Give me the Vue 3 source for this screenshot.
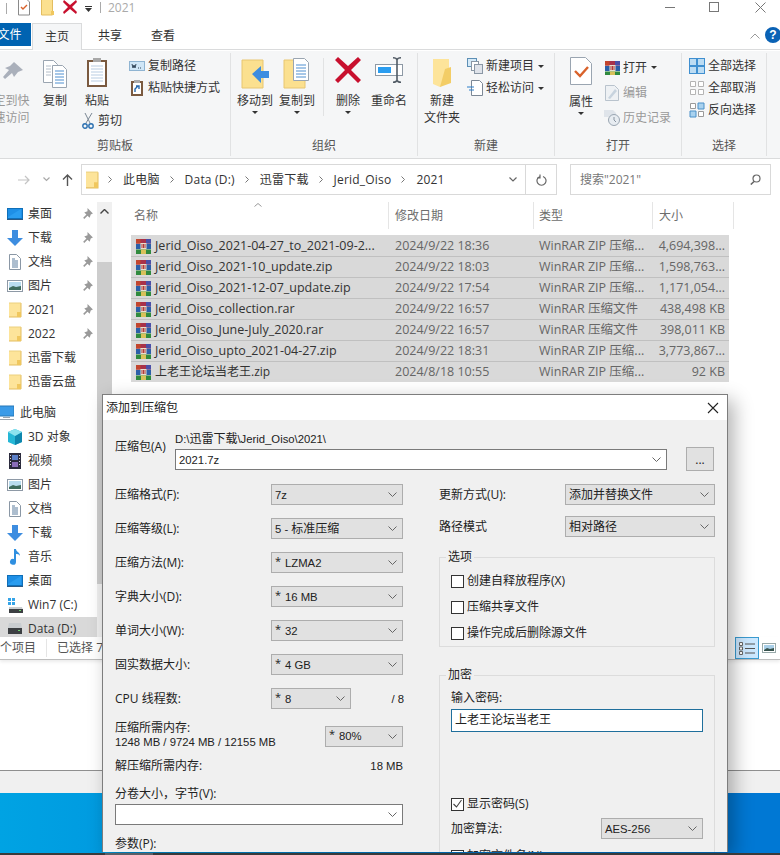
<script setup>
// 资源管理器 + 7-Zip 对话框截图
const g = {
  folder: '<path d="M2 1h12v14H2z" fill="#fde49a"/><path d="M14 1v14H2" fill="none" stroke="#e3bd5f"/><path d="M10 10h4v5h-4z" fill="#f0c75e"/><path d="M2 1h12" stroke="#ecd07e"/>',
  desktop: '<rect x="0.5" y="2.5" width="15" height="10" fill="#1e8fe6" stroke="#0f6fb8"/><path d="M1 11l13-8v9H1z" fill="#2a9df0"/><path d="M0 13h16v1H0z" fill="#2b5a86"/>',
  download: '<path d="M5 0h6v8h5l-8 8-8-8h5z" fill="#3d8de0"/>',
  doc: '<path d="M2.5 .5h7l4 4v11h-11z" fill="#fff" stroke="#8a97a5"/><path d="M5 5h3M5 7h6M5 9h6M5 11h6M5 13h6" stroke="#5a7d9e"/>',
  image: '<rect x="0.5" y="2.5" width="15" height="11" fill="#fff" stroke="#8e99a6"/><rect x="2" y="4" width="12" height="8" fill="#b9dcef"/><path d="M2 10l4-2 3 1 5-1v4H2z" fill="#3f6b5d"/>',
  pc: '<rect x="1" y="1" width="15" height="10" fill="#3a9be8" stroke="#2678b8"/><path d="M5 12h7v1H5zM2 14h14v1H2z" fill="#99a4ae"/>',
  cube: '<path d="M8 0l7 3v10l-7 3-7-3V3z" fill="#25b7d6"/><path d="M8 7l7-4v10l-7 3z" fill="#0e86ad"/><path d="M8 0l7 3-7 4-7-4z" fill="#8ce3ef"/>',
  video: '<rect x="2" y="0" width="12" height="16" fill="#2b2b3d"/><rect x="5" y="2" width="6" height="5" fill="#5b7fc8"/><rect x="5" y="9" width="6" height="5" fill="#8a6db8"/><path d="M3 2h1v1H3zM3 5h1v1H3zM3 8h1v1H3zM3 11h1v1H3zM12 2h1v1h-1zM12 5h1v1h-1zM12 8h1v1h-1zM12 11h1v1h-1z" fill="#ddd"/>',
  music: '<path d="M7 0h2c0 3 4 3 4 7-1-2-3-2-4-2v8a3 3 0 1 1-2-3z" fill="#2f8fe0"/>',
  win: '<path d="M1 1h3v3H1zM5 1h3v3H5zM1 5h3v3H1zM5 5h3v3H5z" fill="#35a4e8"/><path d="M2 10h13l1 3v3H2z" fill="#c9cdd0"/><rect x="2" y="12" width="14" height="4" fill="#3c3f42"/><rect x="12" y="13" width="2" height="1" fill="#6fd36f"/>',
  disk: '<path d="M2 2h12l1 5v4H1V7z" fill="#c9cdd0"/><rect x="1" y="7" width="14" height="6" fill="#3c3f42"/><rect x="11" y="9" width="2" height="1" fill="#6fd36f"/>',
  pin: '<path d="M6 1l5 5-2 1-1 3-2-2-3 3-1-1 3-3-2-2 3-1z" fill="#9a9a9a"/>',
  rar: '<rect x="1" y="1" width="15" height="4.5" fill="#a8324a"/><rect x="1" y="1" width="4.5" height="4.5" fill="#c2452d"/><rect x="11" y="1" width="5" height="4.5" fill="#4a4fa8"/><rect x="1" y="6" width="15" height="5" fill="#2b5fa8"/><rect x="5.5" y="5" width="6" height="6" fill="#e8e0d0"/><path d="M7 6v4M8.5 6v4M10 6v4" stroke="#b33a3a"/><rect x="1" y="11.5" width="15" height="4.5" fill="#2f8a3e"/><rect x="6" y="11.5" width="5" height="4.5" fill="#d8c15a"/>'
}

const sideTop = [
  { icon: 'desktop', text: '桌面', pin: true },
  { icon: 'download', text: '下载', pin: true },
  { icon: 'doc', text: '文档', pin: true },
  { icon: 'image', text: '图片', pin: true },
  { icon: 'folder', text: '2021', pin: true },
  { icon: 'folder', text: '2022', pin: true },
  { icon: 'folder', text: '迅雷下载' },
  { icon: 'folder', text: '迅雷云盘' }
]
const sideBottom = [
  { icon: 'cube', text: '3D 对象' },
  { icon: 'video', text: '视频' },
  { icon: 'image', text: '图片' },
  { icon: 'doc', text: '文档' },
  { icon: 'download', text: '下载' },
  { icon: 'music', text: '音乐' },
  { icon: 'desktop', text: '桌面' },
  { icon: 'win', text: 'Win7 (C:)' },
  { icon: 'disk', text: 'Data (D:)', active: true }
]
const crumbs = ['此电脑', 'Data (D:)', '迅雷下载', 'Jerid_Oiso', '2021']
const zipType = 'WinRAR ZIP 压缩...'
const rarType = 'WinRAR 压缩文件'
const files = [
  ['Jerid_Oiso_2021-04-27_to_2021-09-2...', '2024/9/22 18:36', zipType, '4,694,398...'],
  ['Jerid_Oiso_2021-10_update.zip', '2024/9/22 18:03', zipType, '1,598,763...'],
  ['Jerid_Oiso_2021-12-07_update.zip', '2024/9/22 17:54', zipType, '1,171,054...'],
  ['Jerid_Oiso_collection.rar', '2024/9/22 16:57', rarType, '438,498 KB'],
  ['Jerid_Oiso_June-July_2020.rar', '2024/9/22 16:57', rarType, '398,011 KB'],
  ['Jerid_Oiso_upto_2021-04-27.zip', '2024/9/22 18:31', zipType, '3,773,867...'],
  ['上老王论坛当老王.zip', '2024/8/18 10:55', zipType, '92 KB']
]
const leftRows = [
  { label: '压缩格式(F):', lat: '7z' },
  { label: '压缩等级(L):', lat: '5 - ', cjk: '标准压缩' },
  { label: '压缩方法(M):', star: true, lat: 'LZMA2' },
  { label: '字典大小(D):', star: true, lat: '16 MB' },
  { label: '单词大小(W):', star: true, lat: '32' },
  { label: '固实数据大小:', star: true, lat: '4 GB' }
]
</script>

<template>
  <div class="page">
    <div class="explorer">
      <div class="titlebar">
        <i class="tb-sep"></i>
        <svg class="t-check" width="12" height="16" viewBox="0 0 12 16"><path d="M.5-1h8l3 3v13H.5z" fill="#fff" stroke="#8a8a8a"/><path d="M3 7l2 2 4-4" fill="none" stroke="#d9622b" stroke-width="1.4"/></svg>
        <svg class="t-folder" width="14" height="16" viewBox="0 0 14 16"><path d="M.5-1h11v16H.5z" fill="#fbe08f" stroke="#e3bd5f"/><path d="M10 11h3v4h-3z" fill="#f0c75e"/></svg>
        <svg class="t-x" width="14" height="14" viewBox="0 0 14 14"><path d="M1 0l6 5 6-5 1 2-5 5 5 5-1 2-6-5-6 5-1-2 5-5-5-5z" fill="#c8102e"/></svg>
        <svg class="t-drop" width="7" height="6" viewBox="0 0 7 6"><path d="M0 0h7v1H0zM0 2h7L3.5 6z" fill="#333"/></svg>
        <i class="tb-sep second"></i>
        <span class="t-name">2021</span>
        <div class="win-btns">
          <i class="w-min"></i>
          <i class="w-max"></i>
          <svg width="11" height="11" viewBox="0 0 11 11"><path d="M.5.5l10 10M10.5.5l-10 10" stroke="#777"/></svg>
        </div>
      </div>

      <div class="tabs">
        <span class="tab-file">文件</span>
        <span class="tab on">主页</span>
        <span class="tab">共享</span>
        <span class="tab">查看</span>
        <svg class="tab-up" width="10" height="6" viewBox="0 0 10 6"><path d="M.5 5.5L5 1l4.5 4.5" fill="none" stroke="#999"/></svg>
        <span class="help">?</span>
      </div>

      <div class="ribbon">
        <div class="group clip">
          <div class="group-body">
            <div class="big off pinb">
              <svg width="24" height="32" viewBox="0 0 24 32"><path d="M14 5l9 8-5 2-4 5-2-4-7 6-2-2 6-7-4-2 5-2z" fill="#aab0bb"/></svg>
              <span>定到快<br>速访问</span>
            </div>
            <div class="big copyb">
              <svg width="26" height="32" viewBox="0 0 26 32"><path d="M1.5 3.5h10l4 4v18h-14z" fill="#fff" stroke="#9aa5b1"/><path d="M10.5 8.5h10l4 4v18h-14z" fill="#fff" stroke="#9aa5b1"/><path d="M13 14h9M13 17h9M13 20h9M13 23h9M13 26h9" stroke="#4f8fd0"/><path d="M4 9h5M4 12h5M4 15h5M4 18h5" stroke="#b4bec9"/></svg>
              <span>复制</span>
            </div>
            <div class="big pasteb">
              <svg width="22" height="32" viewBox="0 0 22 32"><rect x="1" y="3" width="20" height="27" fill="#7a5a40"/><rect x="3" y="5" width="16" height="23" fill="#fff"/><path d="M5 9h12M5 12h12M5 15h12M5 18h12M5 21h12M5 24h12" stroke="#b9cde2"/><rect x="7" y="1" width="8" height="4" fill="#a8a8a8"/></svg>
              <span>粘贴</span>
            </div>
            <div class="clip-right">
              <div class="small"><svg width="16" height="10" viewBox="0 0 16 10"><rect x=".5" y=".5" width="15" height="9" fill="#cfe6f7" stroke="#8fb4d2"/><path d="M3 3l1 4 1-3 1 3 1-4M9 7h1M11 7h1" stroke="#33475b" fill="none"/></svg><span>复制路径</span></div>
              <div class="small"><svg class="short" width="14" height="16" viewBox="0 0 14 16"><rect x="1" y="1" width="12" height="15" fill="#7a5a40"/><rect x="3" y="3" width="8" height="11" fill="#fff"/><rect x="4" y="0" width="6" height="3" fill="#aaa"/><path d="M5 12V9l3-3M6 6h3v3" stroke="#2668ad" fill="none" stroke-width="1.4"/></svg><span>粘贴快捷方式</span></div>
              <div class="small cut"><svg width="12" height="16" viewBox="0 0 12 16"><path d="M3 0l5 10M10 0L4 10" stroke="#7a8794" fill="none"/><circle cx="3" cy="13" r="2.2" fill="none" stroke="#2a6fb0" stroke-width="1.4"/><circle cx="9" cy="13" r="2.2" fill="none" stroke="#2a6fb0" stroke-width="1.4"/></svg><span>剪切</span></div>
            </div>
          </div>
          <div class="group-label">剪贴板</div>
        </div>

        <div class="group org">
          <div class="group-body">
            <div class="big moveb">
              <svg width="28" height="32" viewBox="0 0 28 32"><path d="M1 3h21v28H1z" fill="#fbe08f" stroke="#e8c670"/><path d="M11 17l9-8v5h8v7h-8v5z" fill="#3d8de0"/></svg>
              <span>移动到</span><i class="caret"></i>
            </div>
            <div class="big copyto">
              <svg width="28" height="32" viewBox="0 0 28 32"><path d="M1 3h21v28H1z" fill="#fbe08f" stroke="#e8c670"/><path d="M10.5 1.5h11l4 4v18h-15z" fill="#fff" stroke="#9aa5b1"/><path d="M13 8h10M13 11h10M13 14h10M13 17h10M13 20h10" stroke="#4f8fd0"/></svg>
              <span>复制到</span><i class="caret"></i>
            </div>
            <i class="org-sep"></i>
            <div class="big delb">
              <svg width="26" height="26" viewBox="0 0 26 26"><path d="M3 0l10 9 10-9 3 3-10 10 10 10-3 3-10-10-10 10-3-3 10-10L0 3z" fill="#c8102e"/></svg>
              <span>删除</span><i class="caret"></i>
            </div>
            <div class="big renb">
              <svg width="30" height="26" viewBox="0 0 30 26"><rect x="1.5" y="7.5" width="27" height="11" fill="#fff" stroke="#8d99a5"/><rect x="4" y="10" width="13" height="6" fill="#2a9df0"/><path d="M19 .8c2 0 3.5.4 4 2v20.4c-.5 1.6-2 2-4 2M27 .8c-2 0-3.5.4-4 2v20.4c.5 1.6 2 2 4 2" stroke="#505a64" stroke-width="1.6" fill="none"/></svg>
              <span>重命名</span>
            </div>
          </div>
          <div class="group-label">组织</div>
        </div>

        <div class="group newg">
          <div class="group-body">
            <div class="big newb">
              <svg width="20" height="32" viewBox="0 0 20 32"><path d="M1 2h16v22l-9 6-7-3z" fill="#fde49a"/><path d="M13 12l6-2 0 16-11 4z" fill="#f3cd66"/></svg>
              <span>新建<br>文件夹</span>
            </div>
            <div class="new-right">
              <div class="small"><svg width="16" height="16" viewBox="0 0 16 16"><rect x=".5" y=".5" width="9" height="8" fill="#d5eaf8" stroke="#5d8fb5"/><rect x="4.5" y="3.5" width="7" height="9" fill="#fff" stroke="#8a97a5"/><rect x="7.5" y="6.5" width="8" height="9" fill="#dfe3ea" stroke="#8a97a5"/></svg><span>新建项目</span><i class="caret in"></i></div>
              <div class="small"><svg width="16" height="16" viewBox="0 0 16 16"><path d="M4.5.5h8l3 3v12h-11z" fill="#fff" stroke="#7c8896"/><path d="M0 7h7M2 10h5" stroke="#2c7fc9"/></svg><span>轻松访问</span><i class="caret in"></i></div>
            </div>
          </div>
          <div class="group-label">新建</div>
        </div>

        <div class="group openg">
          <div class="group-body">
            <div class="big propb">
              <svg width="22" height="28" viewBox="0 0 22 28"><path d="M.5.5h15l6 6v21H.5z" fill="#fff" stroke="#9aa5b1"/><path d="M5 14l5 5 8-9" fill="none" stroke="#d9622b" stroke-width="2.4"/></svg>
              <span>属性</span><i class="caret"></i>
            </div>
            <div class="open-right">
              <div class="small"><svg width="16" height="15" viewBox="0 0 16 15" v-html="g.rar"></svg><span>打开</span><i class="caret in"></i></div>
              <div class="small off"><svg width="16" height="16" viewBox="0 0 16 16"><path d="M1.5.5h9l4 4v11h-13z" fill="#eef1f4" stroke="#b9c3cd"/><path d="M4 13l7-9 2 2-7 8z" fill="#c7d3de"/></svg><span>编辑</span></div>
              <div class="small off"><svg width="16" height="16" viewBox="0 0 16 16"><path d="M0 0h9l3 3v4H0z" fill="#dfe4ea"/><circle cx="10" cy="10" r="5.5" fill="#e7ecf1" stroke="#9aa6b2"/><path d="M10 7v3l2 2" stroke="#88939f" fill="none"/></svg><span>历史记录</span></div>
            </div>
          </div>
          <div class="group-label">打开</div>
        </div>

        <div class="group selg">
          <div class="group-body sel-col">
            <div class="small"><svg width="16" height="16" viewBox="0 0 16 16"><rect width="16" height="16" fill="#3f8fd0"/><path d="M1 1h6v6H1zM9 1h6v6H9zM1 9h6v6H1zM9 9h6v6H9z" fill="#bcdcf3"/></svg><span>全部选择</span></div>
            <div class="small"><svg width="16" height="16" viewBox="0 0 16 16"><path d="M1.5 1.5h5v5h-5zM9.5 1.5h5v5h-5zM1.5 9.5h5v5h-5zM9.5 9.5h5v5h-5z" fill="#fff" stroke="#b4b4b4"/></svg><span>全部取消</span></div>
            <div class="small"><svg width="16" height="16" viewBox="0 0 16 16"><path d="M1.5 1.5h5v5h-5zM9.5 9.5h5v5h-5z" fill="#fff" stroke="#9a9a9a"/><path d="M9 1h6v6H9zM1 9h6v6H1z" fill="#a9d2ef" stroke="#4a90c8"/></svg><span>反向选择</span></div>
          </div>
          <div class="group-label">选择</div>
        </div>
      </div>

      <div class="addr-row">
        <svg class="nav first" width="12" height="10" viewBox="0 0 12 10"><path d="M0 5h11M7 1l4 4-4 4" fill="none" stroke="#c4c4c4" stroke-width="1.2"/></svg>
        <svg class="nav mid" width="7" height="5" viewBox="0 0 7 5"><path d="M.5.5l3 3 3-3" fill="none" stroke="#a8a8a8" stroke-width="1.2"/></svg>
        <svg class="nav up" width="11" height="12" viewBox="0 0 11 12"><path d="M5.5 12V1M1 5.5l4.5-4.5 4.5 4.5" fill="none" stroke="#555" stroke-width="1.4"/></svg>
        <div class="addr">
          <svg class="addr-folder" width="16" height="18" viewBox="0 0 16 16" preserveAspectRatio="none" v-html="g.folder"></svg>
          <template v-for="c in crumbs" :key="c">
            <svg class="chev" width="4" height="7" viewBox="0 0 4 7"><path d="M.5.5l3 3-3 3" fill="none" stroke="#777"/></svg>
            <span class="crumb">{{ c }}</span>
          </template>
          <svg class="addr-drop" width="8" height="5" viewBox="0 0 8 5"><path d="M.5.5L4 4 7.5.5" fill="none" stroke="#666" stroke-width="1.2"/></svg>
          <div class="refresh">
            <svg width="11" height="12" viewBox="0 0 11 12"><path d="M4 2.5a4.5 4.5 0 1 0 3 0M4 .5v3.5H1" fill="none" stroke="#666" stroke-width="1.2"/></svg>
          </div>
        </div>
        <div class="search">
          <span>搜索"2021"</span>
          <svg width="11" height="11" viewBox="0 0 11 11"><circle cx="6.5" cy="4.5" r="3.5" fill="none" stroke="#666" stroke-width="1.2"/><path d="M4 7.5L.8 10.5" stroke="#666" stroke-width="1.6"/></svg>
        </div>
      </div>

      <div class="main">
        <aside class="side">
          <div class="side-list">
            <div v-for="s in sideTop" :key="s.text + s.icon" class="side-item">
              <svg width="16" height="16" viewBox="0 0 16 16" v-html="g[s.icon]"></svg>
              <span>{{ s.text }}</span>
              <svg v-if="s.pin" class="pin" width="13" height="13" viewBox="0 0 12 12" v-html="g.pin"></svg>
            </div>
            <div class="side-item pc">
              <svg width="16" height="16" viewBox="0 0 16 16" v-html="g.pc"></svg>
              <span>此电脑</span>
            </div>
            <div v-for="s in sideBottom" :key="s.text" class="side-item" :class="{ active: s.active }">
              <svg width="16" height="16" viewBox="0 0 16 16" v-html="g[s.icon]"></svg>
              <span>{{ s.text }}</span>
            </div>
          </div>
          <div class="scroll">
            <svg width="9" height="5" viewBox="0 0 9 5"><path d="M.5 4.5l4-4 4 4" fill="none" stroke="#444" stroke-width="1.4"/></svg>
            <div class="thumb"></div>
          </div>
        </aside>

        <section class="list">
          <div class="list-head">
            <svg class="sort" width="8" height="4" viewBox="0 0 8 4"><path d="M.5 3.5L4 .5l3.5 3" fill="none" stroke="#999"/></svg>
            <span class="h-name">名称</span>
            <span class="h-date">修改日期</span>
            <span class="h-type">类型</span>
            <span class="h-size">大小</span>
          </div>
          <div class="rows">
            <div v-for="f in files" :key="f[0]" class="file">
              <svg width="16" height="16" viewBox="0 0 16 16" v-html="g.rar"></svg>
              <span class="f-name" :class="{ 'f-cjk': f[0].startsWith('上') }">{{ f[0] }}</span>
              <span class="f-date">{{ f[1] }}</span>
              <span class="f-type">{{ f[2] }}</span>
              <span class="f-size">{{ f[3] }}</span>
            </div>
          </div>
        </section>
      </div>

      <div class="status">
        <span class="st-count">个项目</span>
        <span class="st-sel">已选择 7</span>
        <div class="views">
          <span class="view on">
            <svg width="17" height="13" viewBox="0 0 17 13"><path d="M.5.5h3v3h-3zM.5 5h3v3h-3zM.5 9.5h3v3h-3z" fill="#fff" stroke="#666"/><path d="M6 2h10M6 6.5h10M6 11h10" stroke="#555"/></svg>
          </span>
          <span class="view">
            <svg width="14" height="10" viewBox="0 0 14 10"><rect x=".5" y=".5" width="13" height="9" fill="#fff" stroke="#9aa"/><rect x="2" y="2" width="10" height="6" fill="#a9cfe8"/><path d="M2 7l3-2 3 1 4-1v3H2z" fill="#36524c"/></svg>
          </span>
        </div>
      </div>

      <div class="blank"></div>
    </div>

    <div class="shelf"></div>
    <div class="desktop"></div>
    <div class="taskbar"><i></i></div>

    <div class="dialog">
      <div class="d-title">
        <span>添加到压缩包</span>
        <svg width="12" height="12" viewBox="0 0 12 12"><path d="M1 1l10 10M11 1L1 11" stroke="#222" stroke-width="1.1"/></svg>
      </div>
      <div class="d-body">
        <div class="archive">
          <span class="arch-label">压缩包(A)</span>
          <div class="arch-main">
            <div class="arch-path"><span class="lat">D:\</span>迅雷下载<span class="lat">\Jerid_Oiso\2021\</span></div>
            <div class="combo white arch-input">
              <span class="lat">2021.7z</span>
              <svg width="9" height="5" viewBox="0 0 9 5"><path d="M.5.5l4 4 4-4" fill="none" stroke="#666"/></svg>
            </div>
          </div>
          <div class="dots">...</div>
        </div>

        <div class="cols">
          <div class="col-left">
            <div v-for="r in leftRows" :key="r.label" class="row">
              <span>{{ r.label }}</span>
              <div class="combo sel-wide">
                <span class="val"><i v-if="r.star" class="star">*</i><span class="lat">{{ r.lat }}</span>{{ r.cjk }}</span>
                <svg width="9" height="5" viewBox="0 0 9 5"><path d="M.5.5l4 4 4-4" fill="none" stroke="#666"/></svg>
              </div>
            </div>
            <div class="row cpu">
              <span>CPU 线程数:</span>
              <div class="combo">
                <span class="val"><i class="star">*</i><span class="lat">8</span></span>
                <svg width="9" height="5" viewBox="0 0 9 5"><path d="M.5.5l4 4 4-4" fill="none" stroke="#666"/></svg>
              </div>
              <span class="of lat">/ 8</span>
            </div>
            <div class="mem">
              <div>
                <div class="mem-label">压缩所需内存:</div>
                <div class="mem-val lat">1248 MB / 9724 MB / 12155 MB</div>
              </div>
              <div class="combo sel-mem">
                <span class="val"><i class="star">*</i><span class="lat">80%</span></span>
                <svg width="9" height="5" viewBox="0 0 9 5"><path d="M.5.5l4 4 4-4" fill="none" stroke="#666"/></svg>
              </div>
            </div>
            <div class="unmem"><span>解压缩所需内存:</span><span class="lat">18 MB</span></div>
            <div class="vol-label">分卷大小，字节(V):</div>
            <div class="combo white vol">
              <span></span>
              <svg width="9" height="5" viewBox="0 0 9 5"><path d="M.5.5l4 4 4-4" fill="none" stroke="#666"/></svg>
            </div>
            <div class="param">参数(P):</div>
          </div>

          <div class="col-right">
            <div class="row r1">
              <span>更新方式(U):</span>
              <div class="combo sel-right">
                <span>添加并替换文件</span>
                <svg width="9" height="5" viewBox="0 0 9 5"><path d="M.5.5l4 4 4-4" fill="none" stroke="#666"/></svg>
              </div>
            </div>
            <div class="row r2">
              <span>路径模式</span>
              <div class="combo sel-right">
                <span>相对路径</span>
                <svg width="9" height="5" viewBox="0 0 9 5"><path d="M.5.5l4 4 4-4" fill="none" stroke="#666"/></svg>
              </div>
            </div>
            <fieldset class="box options">
              <legend>选项</legend>
              <label class="chk"><i></i>创建自释放程序(X)</label>
              <label class="chk"><i></i>压缩共享文件</label>
              <label class="chk"><i></i>操作完成后删除源文件</label>
            </fieldset>
            <fieldset class="box crypt">
              <legend>加密</legend>
              <div class="pw-label">输入密码:</div>
              <div class="pw">上老王论坛当老王</div>
              <label class="chk shown">
                <i><svg width="11" height="10" viewBox="0 0 11 10"><path d="M1.5 5l3 3 5-7" fill="none" stroke="#444" stroke-width="1.1"/></svg></i>显示密码(S)
              </label>
              <div class="row algo">
                <span>加密算法:</span>
                <div class="combo sel-algo">
                  <span class="lat">AES-256</span>
                  <svg width="9" height="5" viewBox="0 0 9 5"><path d="M.5.5l4 4 4-4" fill="none" stroke="#666"/></svg>
                </div>
              </div>
              <label class="chk names"><i><svg width="11" height="10" viewBox="0 0 11 10"><path d="M1.5 5l3 3 5-7" fill="none" stroke="#444" stroke-width="1.1"/></svg></i>加密文件名(N)</label>
            </fieldset>
          </div>
        </div>
      </div>
    </div>
  </div>
</template>

<style>
html, body { margin: 0; background: #fff; overflow: hidden; }
</style>

<style scoped>
.page {
  position: relative;
  width: 780px;
  height: 855px;
  overflow: hidden;
  background: #fff;
  color: #333;
  font: 12px/16px "Open Sans", "Noto Sans CJK SC", sans-serif;
}
i { display: block; font-style: normal; }
svg { display: block; flex: none; }

/* title bar */
.titlebar {
  height: 23px;
  display: flex;
  align-items: flex-start;
  position: relative;
}
.tb-sep { width: 1px; height: 11px; background: #aaa; margin: 3px 0 0 6px; }
.tb-sep.second { margin: 2px 0 0 8px; }
.t-check { margin-left: 11px; }
.t-folder { margin-left: 11px; }
.t-x { margin-left: 8px; }
.t-drop { margin: 6px 0 0 8px; }
.t-name { margin: 0 0 0 7px; color: #aaa; font-size: 12px; line-height: 15px; }
.win-btns { margin-left: auto; display: flex; align-items: flex-start; padding-top: 2px; }
.w-min { width: 10px; height: 1px; background: #777; margin: 5px 0 0 0; }
.w-max { width: 10px; height: 10px; border: 1px solid #777; box-sizing: border-box; margin: 0 36px 0 34px; }
.win-btns svg { margin-right: 14px; }

/* tabs */
.tabs {
  height: 26px;
  display: flex;
  align-items: stretch;
  border-bottom: 1px solid #dadbdc;
  position: relative;
}
.tab-file {
  width: 43px;
  margin-left: -12px;
  height: 23px;
  background: #0063b1;
  color: #fff;
  text-align: center;
  line-height: 23px;
}
.tab { width: 50px; text-align: center; line-height: 26px; margin-left: 3px; }
.tab.on {
  margin-left: 1px;
  background: #f5f6f7;
  border: 1px solid #dadbdc;
  border-bottom: 0;
  height: 27px;
  box-sizing: border-box;
}
.tab-up { margin: 10px 0 0 auto; }
.help {
  width: 16px;
  height: 16px;
  margin: 4px -1px 0 5px;
  border-radius: 50%;
  background: #0a62b5;
  color: #fff;
  font: bold 12px/16px "Liberation Sans", sans-serif;
  text-align: center;
}

/* ribbon */
.ribbon {
  height: 107px;
  display: flex;
  margin-top: 1px;
  background: #f5f6f7;
  border-bottom: 1px solid #dadbdc;
}
.group {
  box-sizing: border-box;
  height: 103px;
  margin-top: 2px;
  border-right: 1px solid #e1e2e3;
  display: flex;
  flex-direction: column;
}
.group-body { height: 84px; display: flex; position: relative; }
.group-label { text-align: center; color: #555; line-height: 18px; }
.clip { width: 231px; }
.org { width: 187px; }
.newg { width: 137px; }
.openg { width: 127px; }
.selg { width: 85px; }

.big {
  position: relative;
  display: flex;
  flex-direction: column;
  align-items: center;
  padding-top: 4px;
  line-height: 17px;
  text-align: center;
}
.big > span { margin-top: 3px; }
.off { color: #999; }
.caret {
  width: 0;
  height: 0;
  margin-top: 2px;
  border-left: 3px solid transparent;
  border-right: 3px solid transparent;
  border-top: 3px solid #333;
}
.caret.in { margin: 0 0 0 4px; }
.small { display: flex; align-items: center; height: 22px; white-space: nowrap; }
.small > span { margin-left: 3px; }
.short { margin: 0 1px; }

.pinb { width: 39px; margin-left: -8px; }
.copyb { width: 26px; margin-left: 11px; }
.pasteb { width: 26px; margin-left: 16px; }
.clip-right { margin-left: 19px; padding-top: 2px; }
.small.cut { margin: 10px 0 0 -47px; height: 24px; }
.small.cut > span { margin-left: 4px; }

.moveb { width: 36px; margin-left: 6px; }
.copyto { width: 36px; margin-left: 6px; }
.org-sep { width: 1px; height: 58px; margin: 5px 0 0 8px; background: #e1e2e3; }
.delb { width: 26px; margin-left: 11px; }
.delb > span { margin-top: 9px; }
.renb { width: 36px; margin-left: 10px; }
.renb > span { margin-top: 9px; }

.newb { width: 36px; margin-left: 6px; }
.new-right { margin-left: 7px; padding-top: 2px; }

.propb { width: 26px; margin-left: 13px; }
.propb > span { margin-top: 8px; }
.open-right { margin-left: 10px; padding-top: 2px; }
.open-right .small { height: 25px; }

.sel-col { flex-direction: column; padding: 2px 0 0 7px; height: 82px; }

/* address bar */
.addr-row {
  height: 31px;
  margin-top: 5px;
  display: flex;
  align-items: center;
}
.nav.first { margin-left: 18px; }
.nav.mid { margin-left: 13px; }
.nav.up { margin-left: 12px; }
.addr {
  width: 476px;
  height: 31px;
  box-sizing: border-box;
  border: 1px solid #d9d9d9;
  margin-left: 8px;
  display: flex;
  align-items: center;
  position: relative;
}
.addr-folder { margin: 0 -2px 0 2px; }
.chev { margin: 0 11px 0 10px; }
.crumb { white-space: nowrap; letter-spacing: .2px; }
.addr-drop { margin-left: auto; margin-right: 8px; }
.refresh {
  width: 30px;
  height: 29px;
  border-left: 1px solid #d9d9d9;
  display: flex;
  align-items: center;
  justify-content: center;
}
.search {
  width: 201px;
  height: 31px;
  box-sizing: border-box;
  border: 1px solid #d9d9d9;
  margin-left: 13px;
  padding: 0 9px;
  display: flex;
  align-items: center;
  justify-content: space-between;
  color: #777;
}

/* main */
.main { height: 435px; margin-top: 7px; display: flex; }
.side { width: 112px; flex: none; display: flex; overflow: hidden; }
.side-list { width: 97px; flex: none; }
.side-item {
  height: 24px;
  display: flex;
  align-items: center;
  padding-left: 7px;
  position: relative;
  white-space: nowrap;
}
.side-item > span { margin-left: 5px; }
.pin { position: absolute; left: 81px; top: 5px; }
.side-item.pc { margin: 7px 0 0 -9px; }
.side-item.pc > span { margin-left: 6px; }
.side-item.active { background: #d9d9d9; }
.scroll { width: 15px; background: #f0f0f0; position: relative; padding-top: 7px; box-sizing: border-box; }
.scroll svg { margin: 0 auto; }
.thumb { position: absolute; left: 0; right: 0; top: 60px; height: 322px; background: #cdcdcd; }

.list { flex: 1; padding-left: 19px; }
.list-head {
  position: relative;
  height: 27px;
  display: flex;
  align-items: center;
  color: #6d6d6d;
}
.sort { position: absolute; left: 123px; top: 1px; }
.list-head span { box-sizing: border-box; border-right: 1px solid #e5e5e5; height: 27px; line-height: 27px; padding-left: 3px; }
.h-name { width: 258px; }
.list-head .h-date { width: 145px; padding-left: 6px; }
.list-head .h-type { width: 119px; padding-left: 5px; }
.list-head .h-size { width: 81px; padding-left: 6px; }
.rows { margin-top: 6px; width: 598px; }
.file {
  height: 21px;
  box-sizing: border-box;
  background: #d9d9d9;
  border-top: 1px solid #c0c0c0;
  display: flex;
  align-items: center;
  padding-left: 4px;
  white-space: nowrap;
  color: #666;
  font-size: 12.5px;
}
.file:first-child { border-top: 0; }
.f-name { width: 244px; padding-left: 4px; box-sizing: border-box; color: #333; flex: none; }
.f-cjk { font-size: 12px; }
.f-date { width: 144px; flex: none; }
.f-type { width: 116px; flex: none; }
.f-size { width: 70px; flex: none; text-align: right; }

/* status */
.status {
  height: 22px;
  border-bottom: 1px solid #bdbdbd;
  box-shadow: 0 2px 3px rgba(0, 0, 0, 0.08);
  display: flex;
  align-items: center;
  position: relative;
  color: #555;
}
.st-count { padding-right: 10px; border-right: 1px solid #e5e5e5; line-height: 18px; }
.st-sel { margin-left: 10px; }
.views { margin-left: auto; display: flex; align-items: center; margin-right: 4px; }
.view { display: flex; align-items: center; justify-content: center; }
.view.on { width: 24px; height: 22px; box-sizing: border-box; border: 1px solid #3a9bd0; background: #cce8ff; margin-right: 3px; }

.blank { height: 110px; }
.shelf { height: 22px; background: #f0f0f0; border-top: 1px solid #8f8f8f; }
.desktop { height: 60px; background: linear-gradient(90deg, #00a3e3, #0078d4 70%); }
.taskbar { height: 3px; background: #3a3a3a; position: relative; z-index: 2; }
.taskbar i { width: 48px; height: 3px; margin-left: 105px; background: #5a5f66; }

/* dialog */
.dialog {
  position: absolute;
  left: 102px;
  top: 394px;
  width: 626px;
  height: 458px;
  box-sizing: border-box;
  border: 1px solid #7d7d7d;
  border-bottom: 0;
  background: #f0f0f0;
  box-shadow: 6px 6px 18px rgba(0, 0, 0, 0.3);
  overflow: hidden;
  z-index: 1;
}
.d-title {
  height: 25px;
  background: #fff;
  display: flex;
  align-items: center;
  justify-content: space-between;
  padding: 0 8px 0 3px;
  color: #222;
}
.d-body { padding: 12px 12px 0 12px; color: #222; }
.lat { font-family: "Liberation Sans", sans-serif; font-size: 11.3px; }
.val { display: flex; align-items: center; white-space: pre; }
.star { width: 10px; flex: none; line-height: 10px; margin-top: -4px; font-size: 11px; }

.archive { display: flex; align-items: flex-start; height: 39px; }
.arch-label { width: 60px; flex: none; margin-top: 7px; }
.arch-main { width: 492px; }
.arch-path { line-height: 14px; white-space: nowrap; }
.arch-input { margin-top: 3px; }
.dots {
  width: 28px;
  height: 24px;
  box-sizing: border-box;
  margin: 15px 0 0 19px;
  border: 1px solid #adadad;
  background: #e1e1e1;
  text-align: center;
  line-height: 24px;
}

.combo {
  box-sizing: border-box;
  height: 21px;
  border: 1px solid #adadad;
  background: #e1e1e1;
  display: flex;
  align-items: center;
  justify-content: space-between;
  padding: 0 5px 0 3px;
  white-space: pre;
}
.combo.white { background: #fff; border-color: #7a7a7a; }

.cols { display: flex; margin-top: 13px; }
.col-left { width: 288px; flex: none; }
.col-right { width: 276px; margin-left: 36px; flex: none; }
.row { display: flex; align-items: center; justify-content: space-between; height: 21px; margin-bottom: 13px; white-space: nowrap; }
.sel-wide { width: 132px; }
.row.cpu { display: grid; grid-template-columns: 156px 80px 1fr; }
.of { text-align: right; margin-right: -1px; }
.mem { display: flex; justify-content: space-between; align-items: center; height: 32px; margin-top: -4px; white-space: nowrap; }
.mem-label { line-height: 15px; }
.mem-val { line-height: 14px; }
.sel-mem { width: 78px; margin-top: 4px; }
.unmem { display: flex; justify-content: space-between; margin-top: 8px; line-height: 16px; }
.vol-label { margin-top: 12px; line-height: 16px; }
.vol { margin-top: 2px; }
.param { margin-top: 11px; }

.sel-right { width: 150px; }
.r2 { margin-bottom: 0; margin-top: -2px; }
.box {
  margin: 0;
  padding: 0;
  border: 1px solid #dcdcdc;
  min-width: 0;
  box-sizing: border-box;
  width: 276px;
}
.box legend { margin-left: -5px; padding: 0 2px; line-height: 14px; }
.options { height: 97px; margin-top: 13px; padding: 9px 0 0 11px; }
.chk { display: flex; align-items: center; height: 16px; margin-bottom: 10px; white-space: nowrap; }
.chk i {
  width: 13px;
  height: 13px;
  box-sizing: border-box;
  border: 1px solid #333;
  background: #fff;
  margin-right: 3px;
  flex: none;
}
.crypt { height: 200px; margin-top: 21px; padding: 8px 11px 0 11px; }
.pw-label { line-height: 16px; }
.pw {
  box-sizing: border-box;
  height: 23px;
  width: 252px;
  margin-top: 3px;
  border: 1px solid #1f6f9c;
  background: #fff;
  padding: 0 3px;
  line-height: 19px;
}
.shown { margin: 64px 0 0 0; }
.algo { margin: 6px 0 0; }
.sel-algo { width: 102px; }
.names { margin-top: 9px; }
</style>
